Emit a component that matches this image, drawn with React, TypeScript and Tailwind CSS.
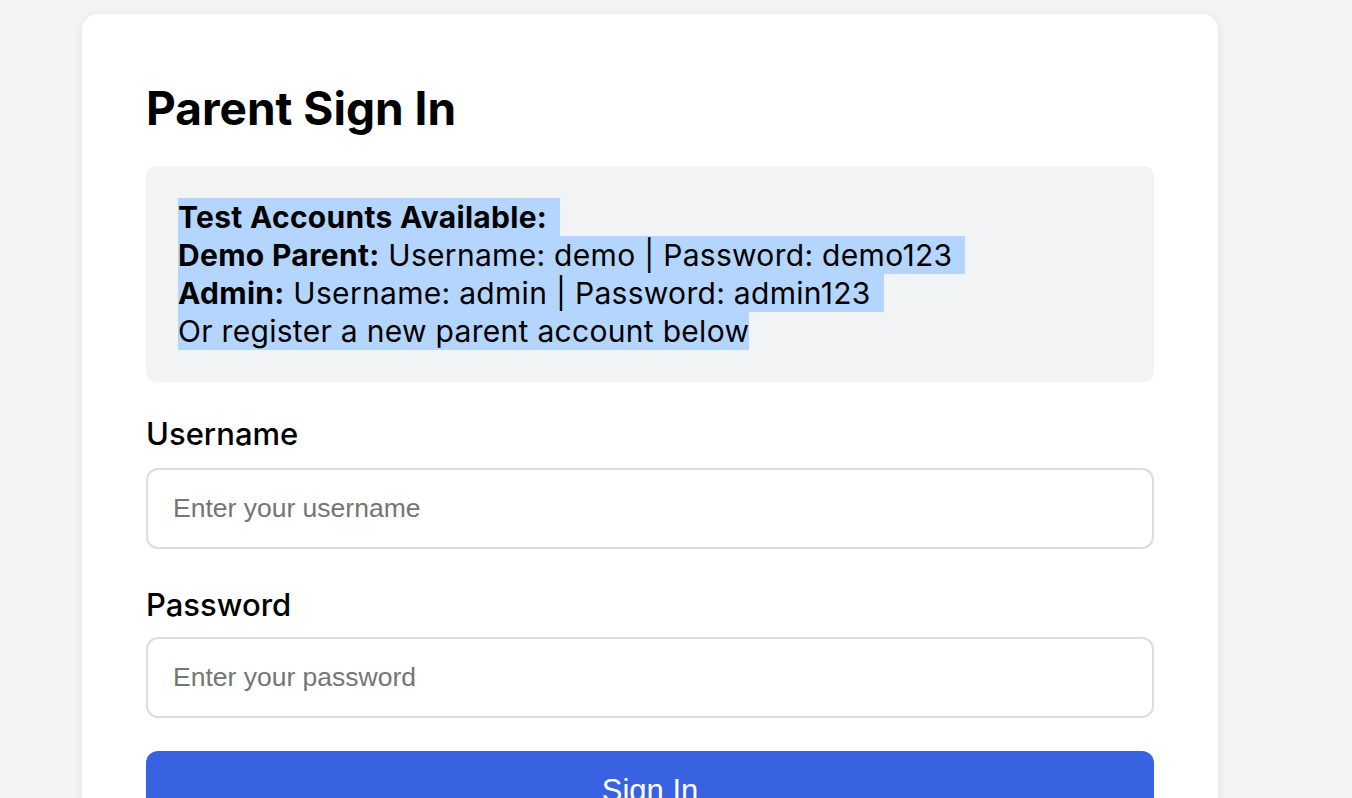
export default function App() {
  const lines = [
    { bold: 'Test Accounts Available:', rest: '', trail: true },
    { bold: 'Demo Parent:', rest: ' Username: demo | Password: demo123', trail: true },
    { bold: 'Admin:', rest: ' Username: admin | Password: admin123', trail: true },
    { bold: '', rest: 'Or register a new parent account below', trail: false },
  ]

  return (
    <div className="min-h-screen bg-[#f4f4f4] px-[82px] pt-[14px] font-['Inter',sans-serif] text-black">
      <div className="w-[1136px] rounded-[16px] bg-white px-[64px] pt-[66px] pb-[64px] shadow-[0_2px_12px_rgba(0,0,0,0.08)]">
        <h1 className="text-[46px] font-bold leading-[56px]">Parent Sign In</h1>

        {/* test accounts */}
        <div className="mt-[30px] rounded-[10px] bg-[#f2f3f5] px-[32px] py-[32px] text-[30px] leading-[38px] tracking-[0.3px]">
          {lines.map((l, i) => (
            <div key={i} className="h-[38px]">
              <span className={`inline-block bg-[#b4d5fe] ${l.trail ? 'pr-[13px]' : ''}`}>
                {l.bold && <b className="font-bold">{l.bold}</b>}
                {l.rest}
              </span>
            </div>
          ))}
        </div>

        <form className="mt-[32px]" onSubmit={(e) => e.preventDefault()}>
          <label className="block text-[31px] font-medium leading-[40px]">Username</label>
          <input
            type="text"
            placeholder="Enter your username"
            className="mt-[14px] block h-[81px] w-full rounded-[12px] border-2 border-[#dddddd] px-[25px] font-['Liberation_Sans',Arial,sans-serif] text-[26.5px] placeholder:text-[#757575] outline-none"
          />

          <label className="mt-[36px] block text-[31px] font-medium leading-[40px]">Password</label>
          <input
            type="password"
            placeholder="Enter your password"
            className="mt-[12px] block h-[81px] w-full rounded-[12px] border-2 border-[#dddddd] px-[25px] font-['Liberation_Sans',Arial,sans-serif] text-[26.5px] placeholder:text-[#757575] outline-none"
          />

          <button
            type="submit"
            className="mt-[33px] block h-[81px] w-full rounded-[12px] bg-[#3862e1] font-['Liberation_Sans',Arial,sans-serif] text-[31px] text-white"
          >
            Sign In
          </button>
        </form>
      </div>
    </div>
  )
}
